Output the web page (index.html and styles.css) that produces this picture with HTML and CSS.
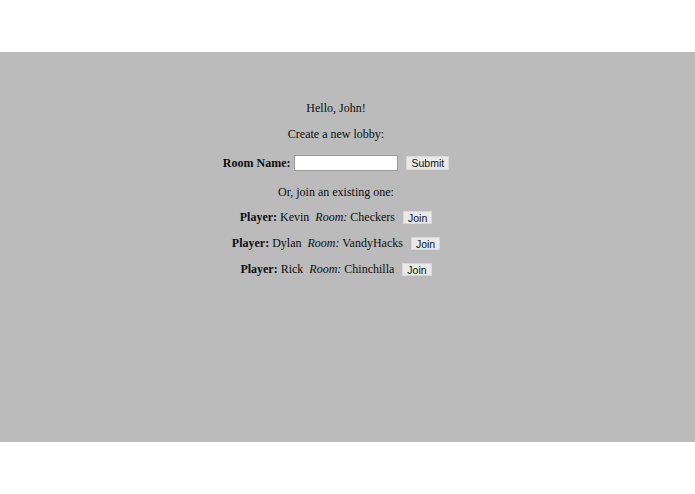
FILE: index.html
```html
<!DOCTYPE html>
<html>
<head>
<meta charset="utf-8">
<link rel="stylesheet" href="styles.css">
</head>
<body>
<div class="stage">
  <p class="line">Hello, John!</p>
  <p class="line">Create a new lobby:</p>
  <form class="create">
    <label class="lbl">Room Name:</label>
    <input class="field" type="text">
    <button class="btn" type="button">Submit</button>
  </form>
  <p class="line or">Or, join an existing one:</p>
  <div class="lobby"><span><b>Player:</b> Kevin <span class="gap"></span><i>Room:</i> Checkers</span><button class="btn" type="button">Join</button></div>
  <div class="lobby"><span><b>Player:</b> Dylan <span class="gap"></span><i>Room:</i> VandyHacks</span><button class="btn" type="button">Join</button></div>
  <div class="lobby"><span><b>Player:</b> Rick <span class="gap"></span><i>Room:</i> Chinchilla</span><button class="btn" type="button">Join</button></div>
</div>
</body>
</html>
```
FILE: styles.css
```css
html, body {
  margin: 0;
  padding: 0;
  background: #ffffff;
}
.stage {
  margin-top: 52px;
  height: 390px;
  box-sizing: border-box;
  padding: 37px 23px 0 0;
  background: #bbbbbb;
  font-family: "Liberation Serif", "Times New Roman", serif;
  font-size: 12px;
  color: #0d0d0d;
  text-align: center;
}
.line {
  margin: 12px 0;
  height: 14px;
  line-height: 14px;
}
.or {
  margin: 13px 0 11px 0;
}
.create {
  margin: 13px 0 0 0;
  height: 18px;
  display: flex;
  justify-content: center;
  align-items: center;
}
.lbl {
  font-weight: bold;
  margin-right: 4px;
}
.field {
  box-sizing: border-box;
  width: 104px;
  height: 16px;
  border: 1px solid #9a9a9a;
  background: #fff;
  padding: 0;
  margin: 0 8px 0 0;
}
.btn {
  box-sizing: border-box;
  font-family: "Liberation Sans", Arial, sans-serif;
  font-size: 10.5px;
  color: #111;
  background: #e9e9e9;
  border: 1px solid #d8d8d8;
  padding: 0 4px;
  height: 14px;
  line-height: 12px;
  margin: 0;
}
.lobby {
  margin: 0 0 12px 0;
  height: 14px;
  line-height: 14px;
  display: flex;
  justify-content: center;
  align-items: center;
  gap: 8px;
}
.lobby .btn {
  height: 13px;
  padding: 0 4px;
}
.gap {
  display: inline-block;
  width: 3px;
}
```
